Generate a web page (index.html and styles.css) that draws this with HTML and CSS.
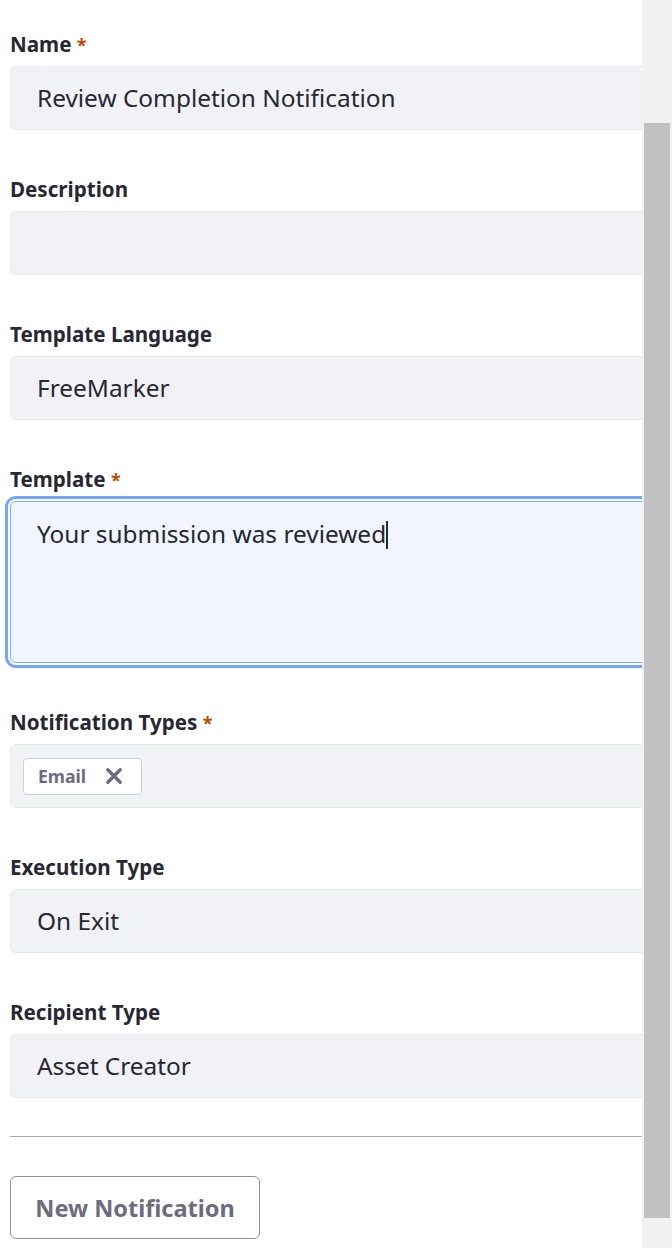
FILE: index.html
```html
<!DOCTYPE html>
<html lang="en">
<head>
<meta charset="utf-8">
<title>Notification</title>
<link rel="stylesheet" href="styles.css">
</head>
<body>
<div class="page">
  <div class="viewport">
    <form class="form">
      <div class="field">
        <label class="label">Name <span class="req">*</span></label>
        <div class="input">Review Completion Notification</div>
      </div>
      <div class="field">
        <label class="label">Description</label>
        <div class="input"></div>
      </div>
      <div class="field">
        <label class="label">Template Language</label>
        <div class="input">FreeMarker</div>
      </div>
      <div class="field">
        <label class="label">Template <span class="req">*</span></label>
        <div class="input textarea">Your submission was reviewed<span class="caret"></span></div>
      </div>
      <div class="field">
        <label class="label">Notification Types <span class="req">*</span></label>
        <div class="input multi">
          <span class="chip">Email
            <svg class="chip-x" viewBox="0 0 16 16" width="18" height="18"><path d="M2.5 2.5 L13.5 13.5 M13.5 2.5 L2.5 13.5" stroke="#6b6c7e" stroke-width="3" stroke-linecap="round" fill="none"/></svg>
          </span>
        </div>
      </div>
      <div class="field">
        <label class="label">Execution Type</label>
        <div class="input">On Exit</div>
      </div>
      <div class="field last">
        <label class="label">Recipient Type</label>
        <div class="input">Asset Creator</div>
      </div>
      <hr class="divider">
      <button type="button" class="btn">New Notification</button>
    </form>
  </div>
  <div class="scrollbar"><div class="thumb"></div></div>
</div>
</body>
</html>
```

FILE: styles.css
```css
html, body {
  margin: 0;
  padding: 0;
  background: #fff;
}
body {
  font-family: "Noto Sans", "Open Sans", sans-serif;
  color: #272833;
}
.page {
  display: flex;
  width: 672px;
  height: 1248px;
  overflow: hidden;
}
.viewport {
  width: 642px;
  height: 1248px;
  overflow: hidden;
}
.form {
  width: 700px;
  padding: 32px 0 0 10px;
  display: flex;
  flex-direction: column;
}
.field {
  display: flex;
  flex-direction: column;
  margin-bottom: 47px;
}
.field.last {
  margin-bottom: 38px;
}
.label {
  font-size: 20.6px;
  line-height: 24px;
  height: 24px;
  font-weight: 700;
  color: #272833;
  margin-bottom: 10px;
}
.req {
  color: #b95000;
  font-size: 18px;
}
.input {
  box-sizing: border-box;
  height: 64px;
  border: 1px solid #e7e7ed;
  border-radius: 6px;
  background: #f1f2f5;
  padding: 0 26px;
  font-size: 24.4px;
  line-height: 62px;
  color: #272833;
}
.textarea {
  height: 162px;
  line-height: 36px;
  padding-top: 14px;
  background: #f0f5ff;
  border-color: #80acff;
  box-shadow: 0 0 0 2px #fff, 0 0 0 5px #75a5ff;
}
.caret {
  display: inline-block;
  width: 2px;
  height: 28px;
  background: #272833;
  vertical-align: -6px;
}
.multi {
  display: flex;
  align-items: center;
  padding: 0 12px;
}
.chip {
  box-sizing: border-box;
  display: inline-flex;
  align-items: center;
  height: 37px;
  width: 119px;
  padding: 0 0 0 14px;
  border: 1px solid #cdced9;
  border-radius: 4px;
  background: #fff;
  font-size: 17.6px;
  line-height: 20px;
  font-weight: 700;
  color: #6b6c7e;
}
.chip-x {
  margin-left: 19px;
}
.divider {
  margin: 0 0 39px 0;
  border: 0;
  height: 1px;
  background: #a7a9bc;
  width: 700px;
}
.btn {
  box-sizing: border-box;
  width: 250px;
  height: 63px;
  border: 1px solid #8f90a0;
  border-radius: 6px;
  background: #fff;
  font-family: "Noto Sans", "Open Sans", sans-serif;
  font-size: 23.5px;
  font-weight: 700;
  color: #6b6c7e;
  padding: 0;
  text-align: center;
}
.scrollbar {
  width: 30px;
  height: 1248px;
  background: #f1f1f1;
  display: flex;
  flex-direction: column;
  align-items: center;
  padding-top: 123px;
  box-sizing: border-box;
}
.thumb {
  width: 26px;
  height: 1095px;
  background: #c1c1c1;
}
```
